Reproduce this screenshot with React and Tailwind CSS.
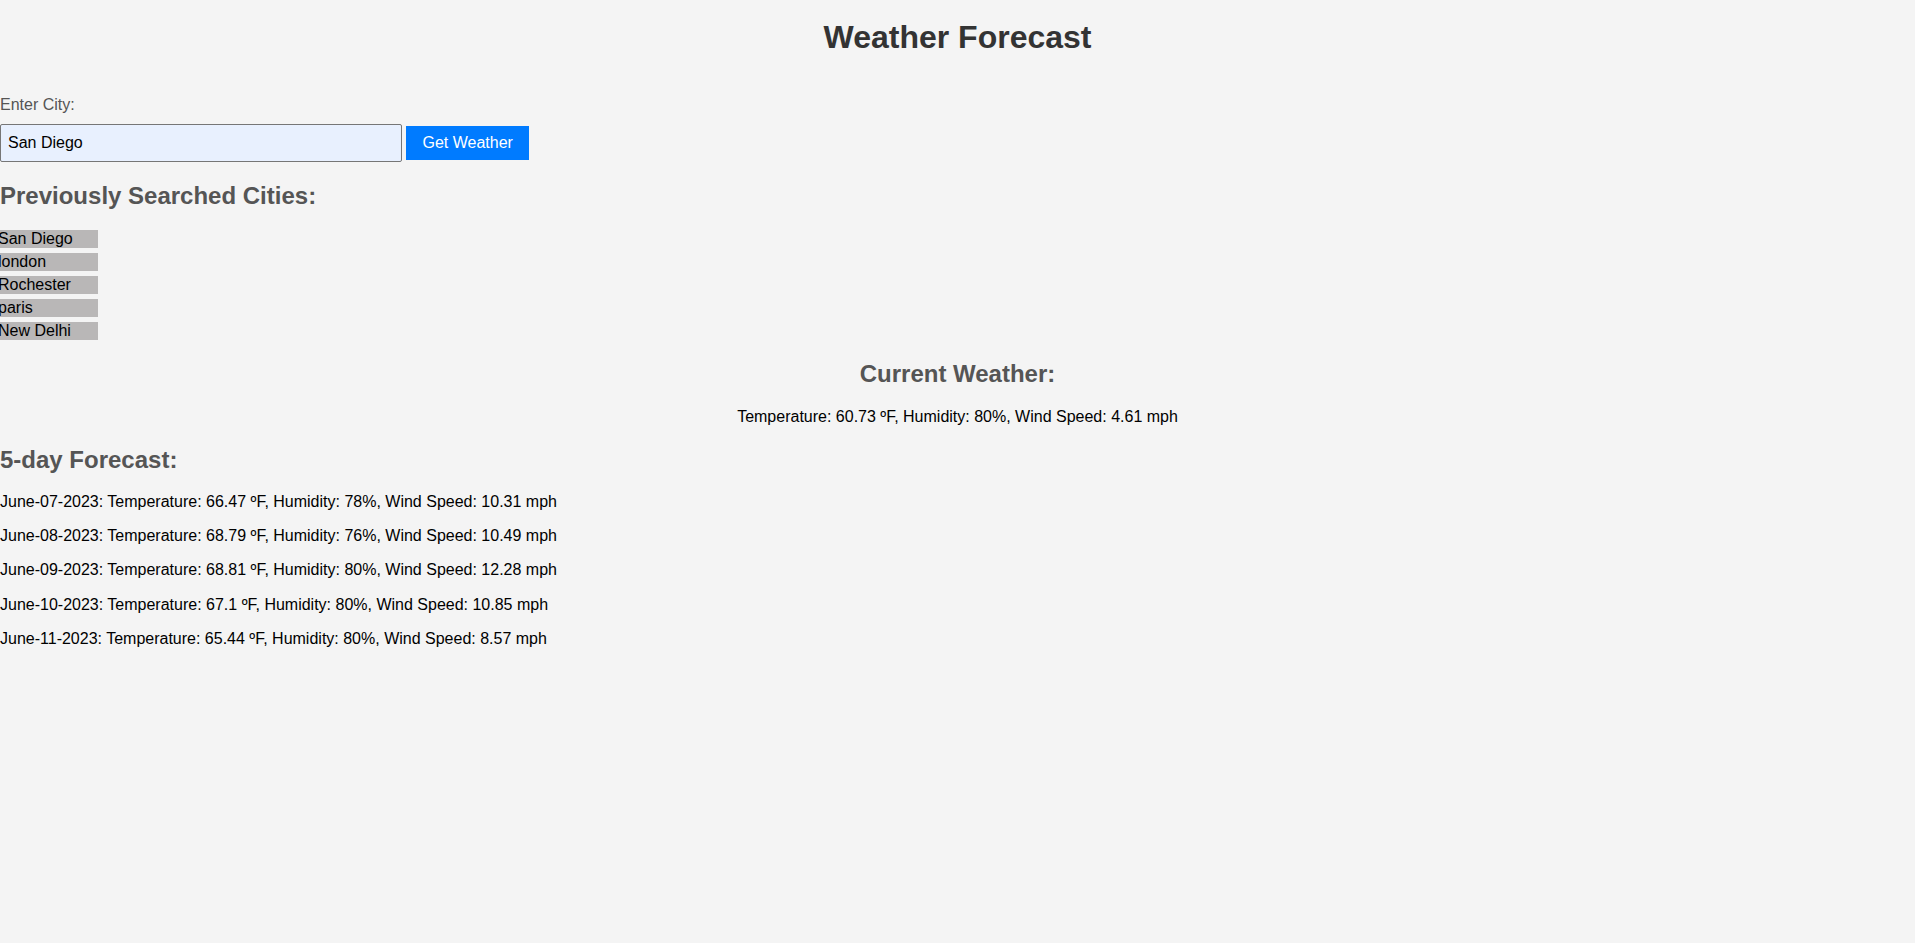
import React, { useState } from "react";

const cities = ["San Diego", "london", "Rochester", "paris", "New Delhi"];
const forecast = [
  "June-07-2023: Temperature: 66.47 ºF, Humidity: 78%, Wind Speed: 10.31 mph",
  "June-08-2023: Temperature: 68.79 ºF, Humidity: 76%, Wind Speed: 10.49 mph",
  "June-09-2023: Temperature: 68.81 ºF, Humidity: 80%, Wind Speed: 12.28 mph",
  "June-10-2023: Temperature: 67.1 ºF, Humidity: 80%, Wind Speed: 10.85 mph",
  "June-11-2023: Temperature: 65.44 ºF, Humidity: 80%, Wind Speed: 8.57 mph",
];

export default function App() {
  const [city, setCity] = useState("San Diego");
  return (
    <div className="min-h-[943px] w-full bg-[#f4f4f4] font-['Liberation_Sans',Arial,sans-serif] text-[16px] leading-[normal] text-black">
      <div className="flex flex-col pt-[19px]">
        <h1 className="text-center text-[32px] font-bold leading-[normal] text-[#333333]">
          Weather Forecast
        </h1>

        <label className="mt-[40px] text-[16px] leading-[normal] text-[#555555]">
          Enter City:
        </label>

        <div className="mt-[9.6px] flex items-center gap-[4px]">
          <input
            value={city}
            onChange={(e) => setCity(e.target.value)}
            className="h-[38px] w-[402px] rounded-[2px] border border-[#767676] bg-[#e8f0fe] px-[7px] text-[16px] leading-[normal] text-black outline-none"
          />
          <button className="h-[34px] bg-[#007bff] px-[16.5px] text-[16px] leading-[normal] text-white">
            Get Weather
          </button>
        </div>

        <h2 className="mt-[20px] text-[24px] font-bold leading-[normal] text-[#555555]">
          Previously Searched Cities:
        </h2>

        <div className="mt-[20.5px] flex flex-col gap-[5px]">
          {cities.map((c) => (
            <div
              key={c}
              className="flex h-[18px] w-[98px] items-center overflow-hidden bg-[#b9b7b7] text-[16px] leading-[18px] text-black"
            >
              <span className="-ml-[2px] whitespace-nowrap">{c}</span>
            </div>
          ))}
        </div>

        <h2 className="mt-[20px] text-center text-[24px] font-bold leading-[normal] text-[#555555]">
          Current Weather:
        </h2>
        <p className="mt-[20px] text-center text-[16px] leading-[normal] text-black">
          Temperature: 60.73 ºF, Humidity: 80%, Wind Speed: 4.61 mph
        </p>

        <h2 className="mt-[20px] text-[24px] font-bold leading-[normal] text-[#555555]">
          5-day Forecast:
        </h2>
        <div className="mt-[19px] flex flex-col gap-[16.2px]">
          {forecast.map((f) => (
            <p key={f} className="text-[16px] leading-[normal] text-black">
              {f}
            </p>
          ))}
        </div>
      </div>
    </div>
  );
}
